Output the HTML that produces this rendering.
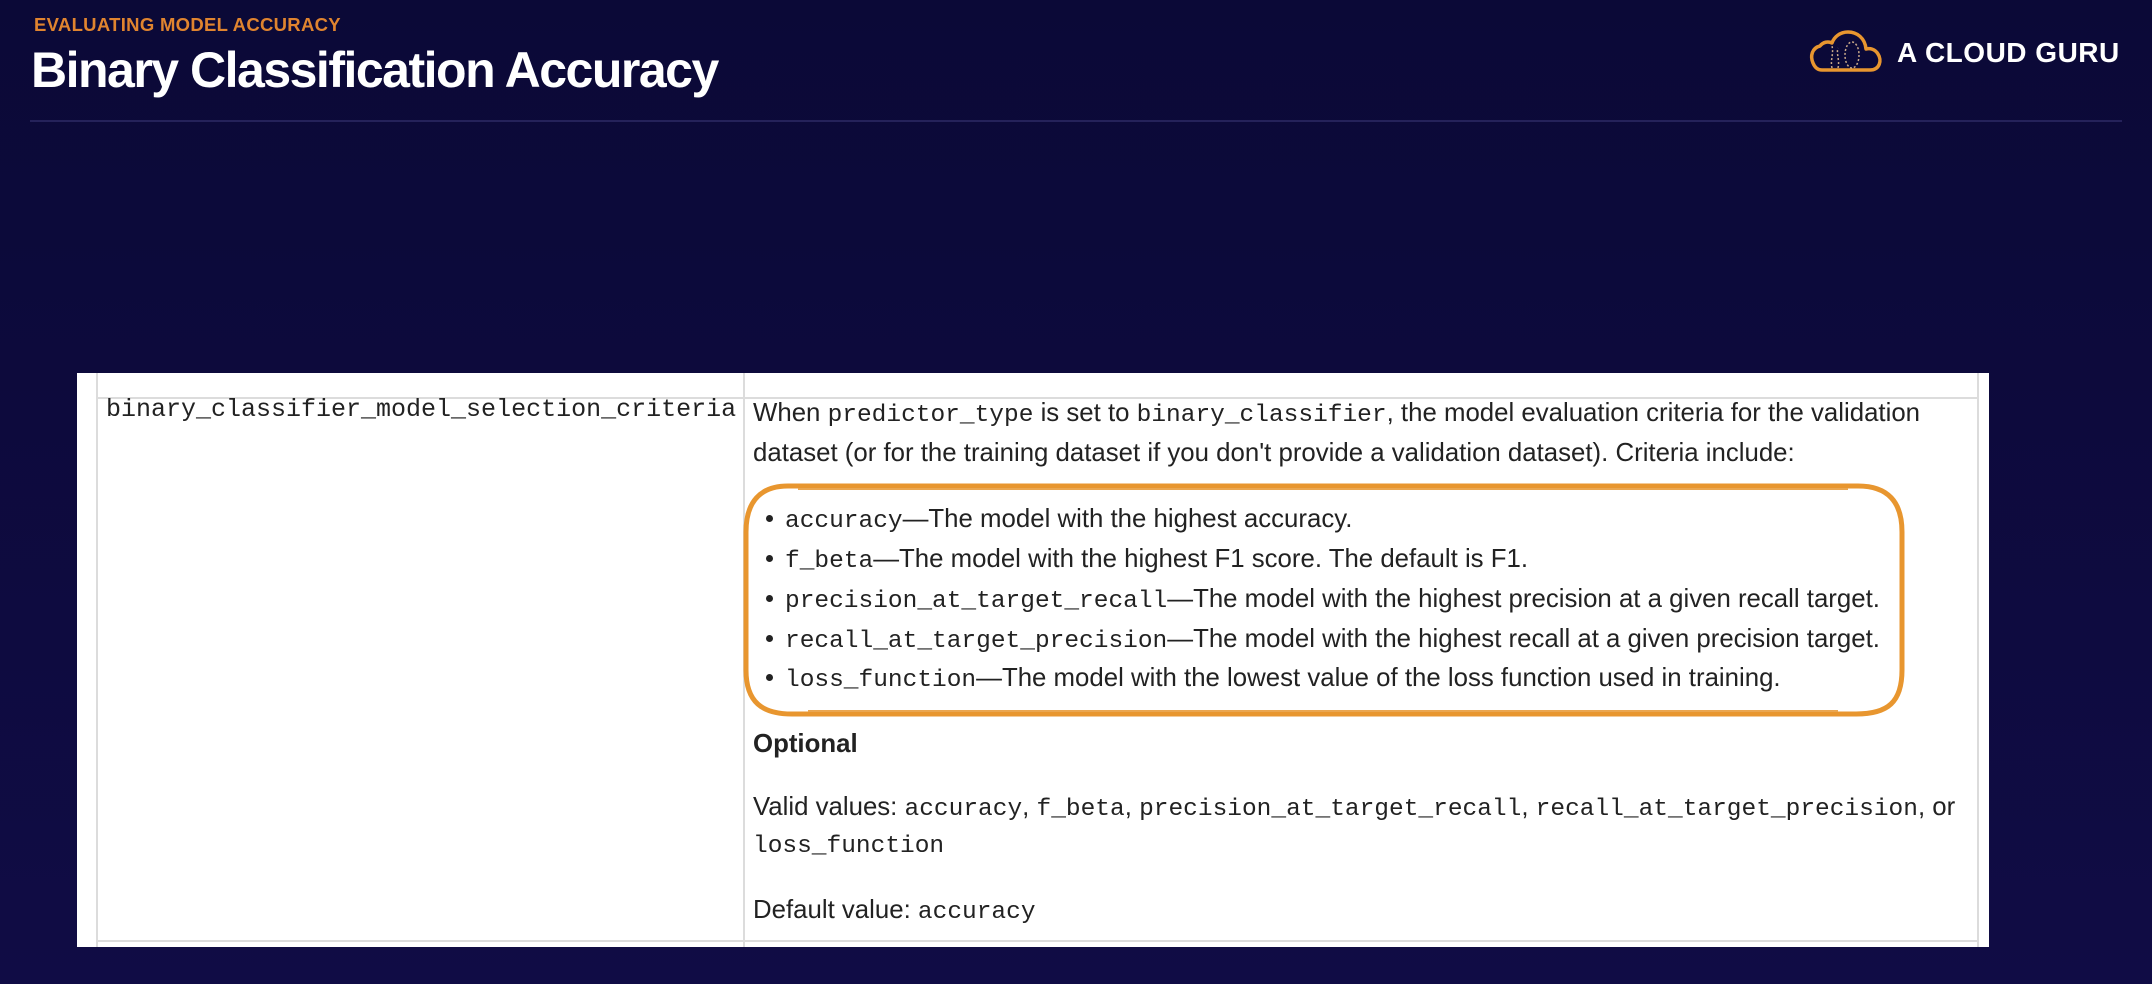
<!DOCTYPE html>
<html><head><meta charset="utf-8"><style>
html,body{margin:0;padding:0}
body{width:2152px;height:984px;overflow:hidden;background:linear-gradient(180deg,#0b0937 0%,#100c45 100%);position:relative;font-family:"Liberation Sans",sans-serif}
.a{position:absolute;white-space:nowrap}
.sub{left:34px;top:14px;font-size:18.5px;font-weight:bold;color:#e0842f;letter-spacing:0.3px}
.title{left:31px;top:41px;font-size:50px;font-weight:bold;color:#fff;letter-spacing:-1.5px}
.line{left:30px;top:120px;width:2092px;height:2px;background:#25225a}
.logo{left:1897px;top:37px;font-size:28px;font-weight:bold;color:#fff;letter-spacing:0.5px}
.panel{left:77px;top:373px;width:1912px;height:574px;background:#fff}
.vl{position:absolute;background:#dcdcdc;width:2px}
.hl{position:absolute;background:#dcdcdc;height:2px}
.t{font-size:25.8px;color:#222}
code,.m{font-family:"Liberation Mono",monospace;font-size:24.5px;color:#222}
.lc{font-family:"Liberation Mono",monospace;font-size:25px;color:#222}
.dot{display:inline-block;width:7px;height:7px;border-radius:50%;background:#222;margin-right:12px;vertical-align:middle;position:relative;top:-2px}
</style></head><body>
<div class="a sub">EVALUATING MODEL ACCURACY</div>
<div class="a title">Binary Classification Accuracy</div>
<div class="a line"></div>
<svg class="a" style="left:1808px;top:28px" width="76" height="46" viewBox="0 0 76 46">
<path d="M14 42 H62 C72 42 74 32 70 26 C67 21 62 20 58 21 C57 10 49 4 40 4 C32 4 26 9 24 15 C20 13 15 14 12 18 C4 20 2 28 5 35 C7 40 10 42 14 42 Z" fill="none" stroke="#e8962f" stroke-width="3.5" stroke-linejoin="round"/>
<path d="M24 40 C22 32 26 26 24 18 M30 40 C32 32 28 26 30 20" fill="none" stroke="#c9a98a" stroke-width="1.5" stroke-dasharray="2 2"/>
<ellipse cx="44" cy="27" rx="7" ry="13" fill="none" stroke="#c9a98a" stroke-width="1.5" stroke-dasharray="2 2"/>
</svg>
<div class="a logo">A CLOUD GURU</div>

<div class="a panel"></div>
<div class="hl" style="left:96px;top:397px;width:1882px"></div>
<div class="hl" style="left:96px;top:940px;width:1882px"></div>
<div class="vl" style="left:96px;top:373px;height:574px"></div>
<div class="vl" style="left:743px;top:373px;height:574px"></div>
<div class="vl" style="left:1977px;top:373px;height:574px"></div>

<div class="a lc" style="left:106px;top:395px">binary_classifier_model_selection_criteria</div>

<div class="a t" style="left:753px;top:399px">When <code>predictor_type</code> is set to <code>binary_classifier</code>, the model evaluation criteria for the validation</div>
<div class="a t" style="left:753px;top:439px">dataset (or for the training dataset if you don't provide a validation dataset). Criteria include:</div>

<div class="a t" style="left:766px;top:505px"><span class="dot"></span><code>accuracy</code>—The model with the highest accuracy.</div>
<div class="a t" style="left:766px;top:545px"><span class="dot"></span><code>f_beta</code>—The model with the highest F1 score. The default is F1.</div>
<div class="a t" style="left:766px;top:585px"><span class="dot"></span><code>precision_at_target_recall</code>—The model with the highest precision at a given recall target.</div>
<div class="a t" style="left:766px;top:625px"><span class="dot"></span><code>recall_at_target_precision</code>—The model with the highest recall at a given precision target.</div>
<div class="a t" style="left:766px;top:664px"><span class="dot"></span><code>loss_function</code>—The model with the lowest value of the loss function used in training.</div>

<svg class="a" style="left:738px;top:480px" width="1172" height="242" viewBox="0 0 1172 242">
<path d="M50 6 H1120 C1150 6 1164 22 1164 52 V190 C1164 222 1150 234 1118 234 H54 C24 234 8 222 8 190 V52 C8 22 22 6 50 6 Z" fill="none" stroke="#e8962f" stroke-width="5"/>
<path d="M60 9 H1110 M70 231 H1100" stroke="#eaa650" stroke-width="2" fill="none"/>
</svg>

<div class="a t" style="left:753px;top:730px;font-weight:bold">Optional</div>
<div class="a t" style="left:753px;top:793px">Valid values: <code>accuracy</code>, <code>f_beta</code>, <code>precision_at_target_recall</code>, <code>recall_at_target_precision</code>, or</div>
<div class="a t" style="left:753px;top:830px"><code>loss_function</code></div>
<div class="a t" style="left:753px;top:896px">Default value: <code>accuracy</code></div>
</body></html>
